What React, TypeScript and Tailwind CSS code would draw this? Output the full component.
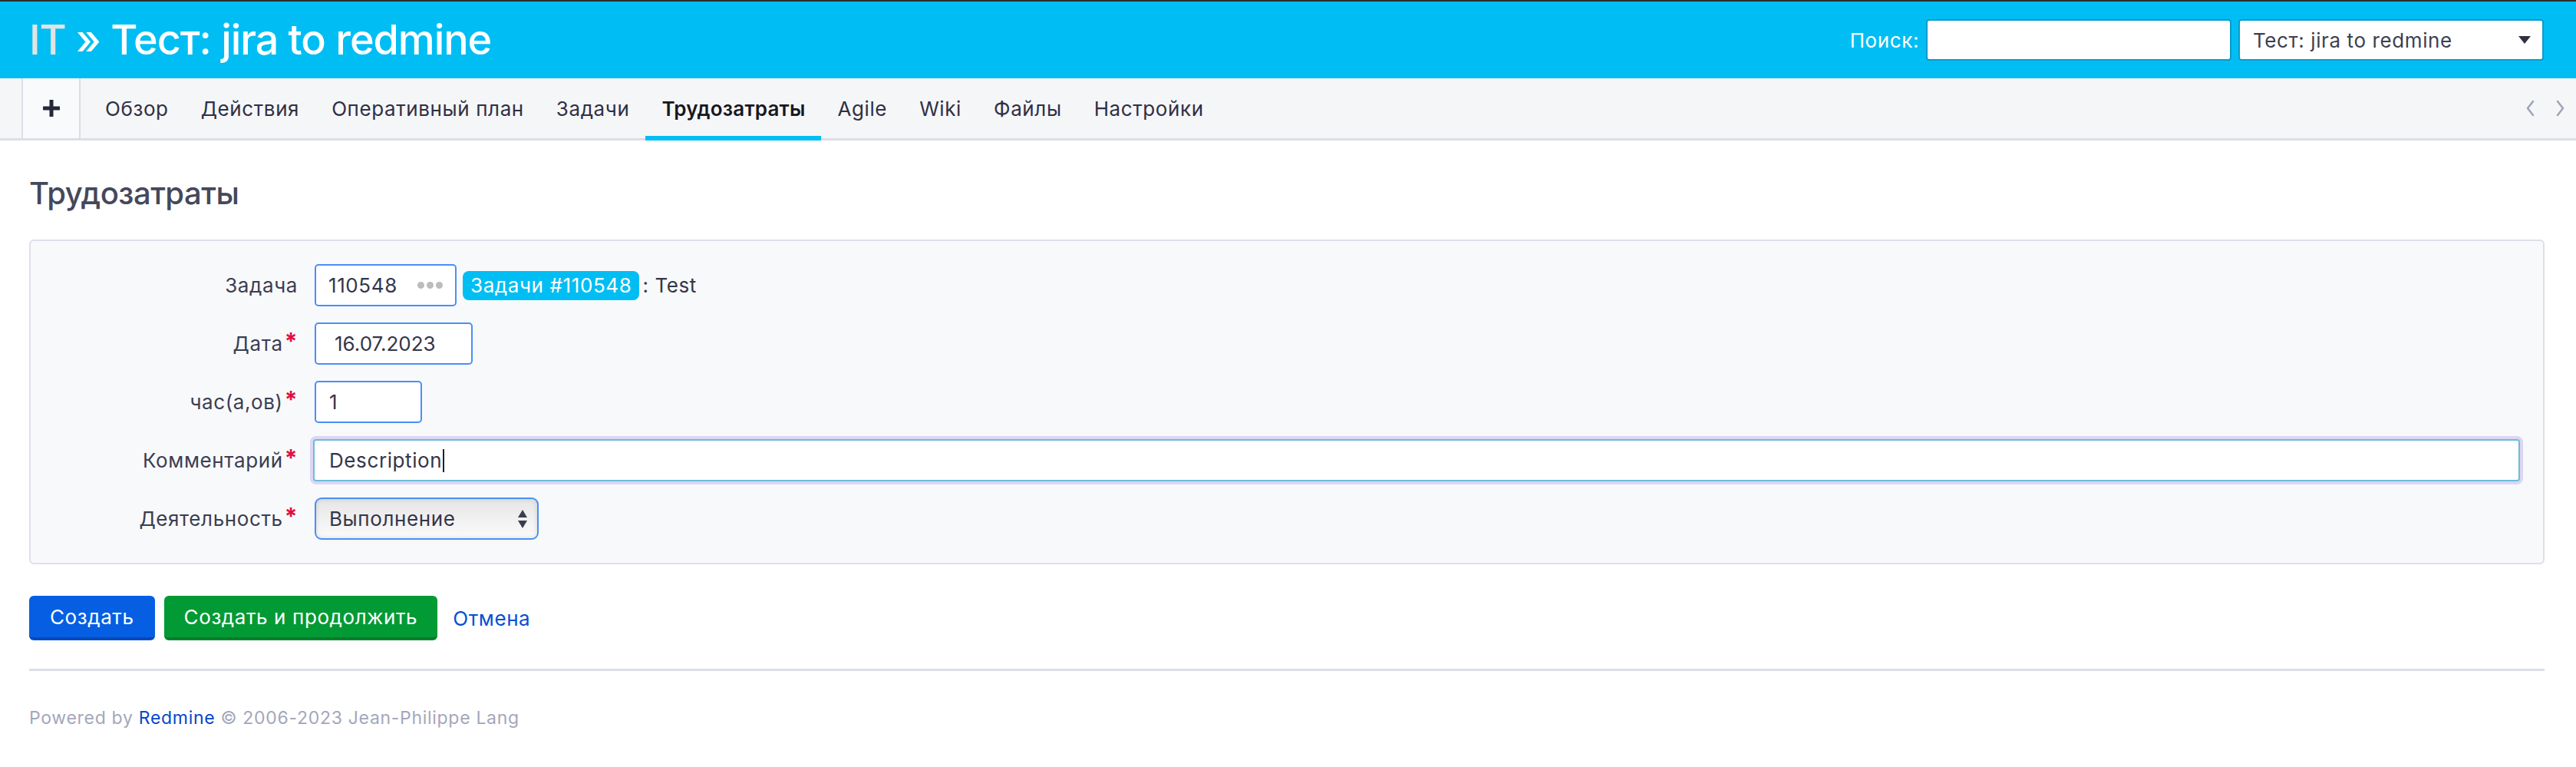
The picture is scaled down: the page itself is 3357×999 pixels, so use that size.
import React from "react";

const items = ["Обзор", "Действия", "Оперативный план", "Задачи", "Трудозатраты", "Agile", "Wiki", "Файлы", "Настройки"];

function Label({ text, req }: { text: string; req?: boolean }) {
  return (
    <div className="w-[348px] shrink-0 text-right text-[26px] text-[#3b3e52] flex justify-end items-center">
      <span>{text}</span>
      {req && <span className="text-[#e0103a] font-bold text-[30px] leading-none ml-[2px] -mt-[8px]">*</span>}
    </div>
  );
}

export default function App() {
  return (
    <div className="min-h-[999px] bg-white font-['Inter','Noto_Sans',sans-serif] text-[#33364a] tracking-[0.6px]">
      <div className="h-[2px] bg-[#2b2d31]" />
      <header className="h-[100px] bg-[#00bef3] flex items-center justify-between pl-[38px] pr-[42px]">
        <h1 className="text-[54px] font-medium text-white leading-none tracking-[-1.1px]">
          <span className="text-[#e3e3e3]">IT</span> » Тест: jira to redmine
        </h1>
        <div className="flex items-center">
          <span className="text-[26px] text-white mr-[9px]">Поиск:</span>
          <div className="w-[398px] h-[54px] bg-white border-2 border-[#0b9bcb] rounded-[4px]" />
          <div className="w-[398px] h-[54px] bg-white border-2 border-[#0b9bcb] rounded-[4px] ml-[9px] flex items-center justify-between pl-[17px] pr-[14px]">
            <span className="text-[26px] text-[#3d3f52]">Тест: jira to redmine</span>
            <svg width="18" height="12" viewBox="0 0 18 12"><path d="M1 1 L17 1 L9 11 Z" fill="#2f3140" /></svg>
          </div>
        </div>
      </header>
      <nav className="h-[81px] bg-[#f5f6f8] border-b-[3px] border-[#dcdee7] flex items-stretch">
        <div className="ml-[28px] w-[77px] border-x-2 border-[#dcdee7] bg-[#f9fafb] flex items-center justify-center">
          <svg width="22" height="22" viewBox="0 0 22 22"><path d="M11 1 V21 M1 11 H21" stroke="#25273a" strokeWidth="5" strokeLinecap="round" /></svg>
        </div>
        <ul className="flex ml-[11px]">
          {items.map((it) => {
            const active = it === "Трудозатраты";
            return (
              <li key={it} className={"relative px-[21px] flex items-center text-[26px] " + (active ? "font-semibold text-[#17181f] tracking-[0.2px]" : "text-[#2f3044]")}>
                {it}
                {active && <span className="absolute left-0 right-0 bottom-[-3px] h-[6px] bg-[#00bef3]" />}
              </li>
            );
          })}
        </ul>
        <div className="ml-auto flex items-center gap-[28px] pr-[14px]">
          <svg width="12" height="22" viewBox="0 0 12 22"><path d="M10 2 L3 11 L10 20" stroke="#9ea4b6" strokeWidth="2.5" fill="none" strokeLinecap="round" strokeLinejoin="round" /></svg>
          <svg width="12" height="22" viewBox="0 0 12 22"><path d="M2 2 L9 11 L2 20" stroke="#9ea4b6" strokeWidth="2.5" fill="none" strokeLinecap="round" strokeLinejoin="round" /></svg>
        </div>
      </nav>
      <main className="pl-[38px] pr-[41px]">
        <h2 className="text-[40px] font-medium text-[#45485a] leading-none pt-[49px] pb-[40px] tracking-[-0.5px]">Трудозатраты</h2>
        <div className="border-2 border-[#dde0e8] rounded-[6px] bg-[#f8f9fb] py-[30px]">
          <div className="flex flex-col gap-[21px]">
            <div className="flex items-center h-[55px]">
              <Label text="Задача" />
              <div className="ml-[22px] w-[185px] h-[55px] bg-white border-2 border-[#4a8ff5] rounded-[5px] flex items-center justify-between pl-[16px] pr-[16px] text-[26px]">
                <span>110548</span>
                <span className="flex gap-[3px]">
                  <span className="w-[9px] h-[9px] rounded-full bg-[#bcbcbc]" />
                  <span className="w-[9px] h-[9px] rounded-full bg-[#bcbcbc]" />
                  <span className="w-[9px] h-[9px] rounded-full bg-[#bcbcbc]" />
                </span>
              </div>
              <span className="ml-[8px] h-[38px] px-[10px] rounded-[8px] bg-[#00bef3] text-white text-[26px] flex items-center">Задачи #110548</span>
              <span className="text-[26px] ml-[4px]">: Test</span>
            </div>
            <div className="flex items-center h-[55px]">
              <Label text="Дата" req />
              <div className="ml-[22px] w-[206px] h-[55px] bg-white border-2 border-[#4a8ff5] rounded-[5px] flex items-center pl-[24px] text-[26px] tracking-[0px]">16.07.2023</div>
            </div>
            <div className="flex items-center h-[55px]">
              <Label text="час(а,ов)" req />
              <div className="ml-[22px] w-[140px] h-[55px] bg-white border-2 border-[#4a8ff5] rounded-[5px] flex items-center pl-[17px] text-[26px]">1</div>
            </div>
            <div className="flex items-center h-[55px]">
              <Label text="Комментарий" req />
              <div className="ml-[20px] mr-[30px] flex-1 h-[55px] bg-white border-2 border-[#6dbcd7] rounded-[4px] shadow-[0_0_0_4px_#dcd6f3] flex items-center pl-[19px] text-[26px]">
                Description<span className="inline-block w-[2px] h-[30px] bg-[#222] ml-[1px]" />
              </div>
            </div>
            <div className="flex items-center h-[55px]">
              <Label text="Деятельность" req />
              <div className="ml-[22px] w-[292px] h-[55px] bg-gradient-to-b from-[#e6e6e6] to-[#fbfbfb] border-2 border-[#4a8ff5] rounded-[9px] shadow-[inset_0_0_6px_rgba(0,0,0,0.12)] flex items-center justify-between pl-[17px] pr-[12px] text-[26px]">
                <span>Выполнение</span>
                <svg width="14" height="26" viewBox="0 0 14 26"><path d="M7 1 L13 11 L1 11 Z M1 15 L13 15 L7 25 Z" fill="#3a3d50" /></svg>
              </div>
            </div>
          </div>
        </div>
        <div className="flex items-center mt-[41px]">
          <button className="h-[58px] px-[27px] rounded-[6px] bg-[#065fe3] border-b-4 border-[#0349c0] text-white text-[26px] tracking-[0.6px]">Создать</button>
          <button className="ml-[12px] h-[58px] px-[26px] rounded-[6px] bg-[#029a34] border-b-4 border-[#017f2a] text-white text-[26px] tracking-[0.6px]">Создать и продолжить</button>
          <a className="ml-[20px] text-[26px] text-[#0550d4]">Отмена</a>
        </div>
        <div className="mt-[37px] border-t-[3px] border-[#dcdfe8]" />
        <div className="mt-[44px] text-[23px] text-[#a3a7ba] tracking-[0.7px]">
          Powered by <span className="text-[#0747c8]">Redmine</span> © 2006-2023 Jean-Philippe Lang
        </div>
      </main>
    </div>
  );
}
